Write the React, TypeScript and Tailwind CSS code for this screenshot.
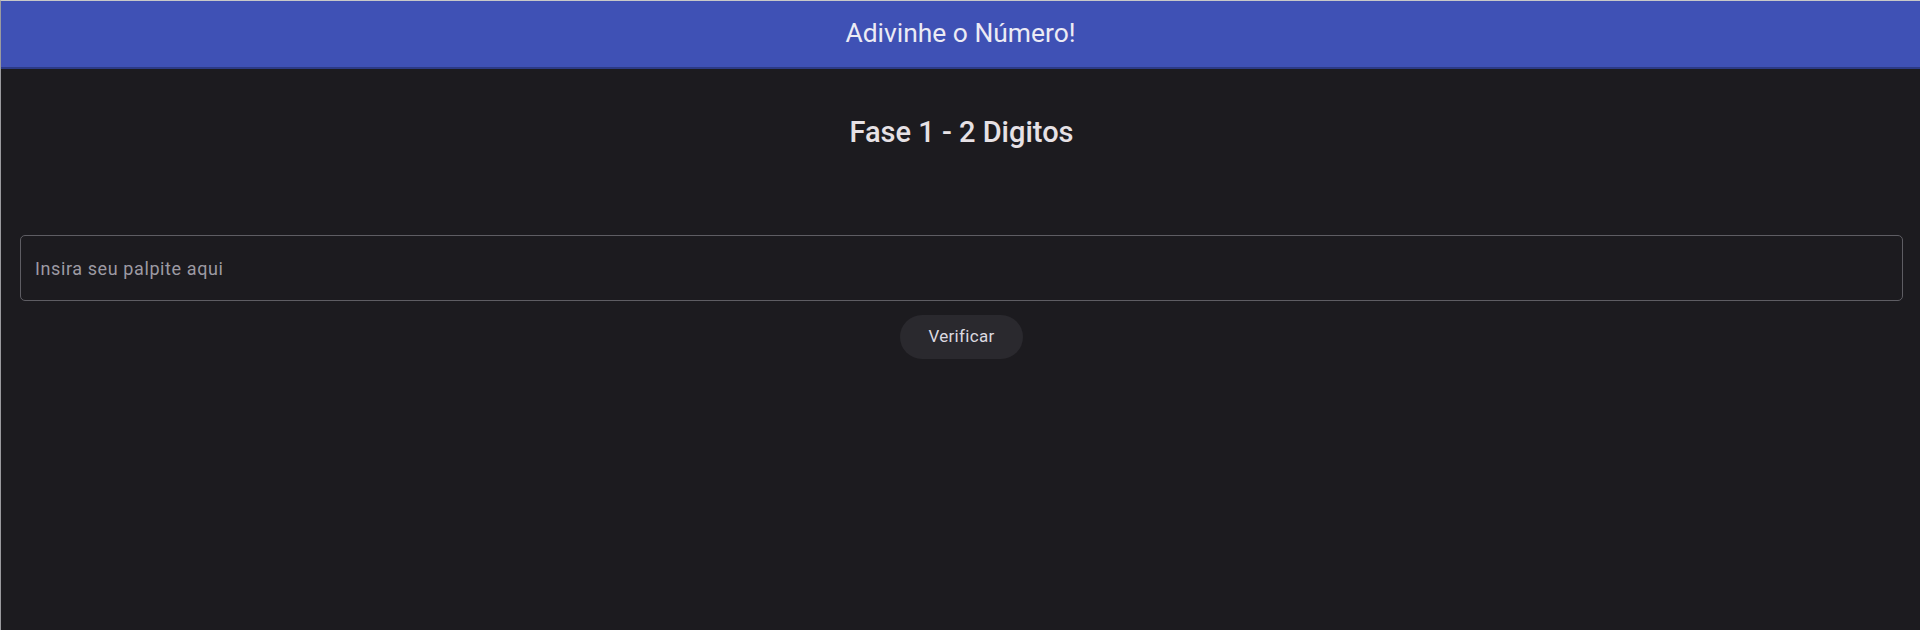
import React from "react";

const App = () => {
  return (
    <div
      className="min-h-[630px] w-full bg-[#1c1b1f] border-t border-l border-t-[#c8c8c8] border-l-[#9a9a9e] text-[#e6e1e5] overflow-hidden"
      style={{ fontFamily: "Roboto, 'Noto Sans', sans-serif" }}
    >
      {/* App bar */}
      <header className="h-[66px] bg-[#3f51b5] flex items-center justify-center shadow-[0_2px_0_#2c3a85]">
        <h1 className="text-[26.4px] text-[#ecebf4]">Adivinhe o Número!</h1>
      </header>

      {/* Content */}
      <main className="pl-[19px] pr-[17px] pt-[48px] flex flex-col items-center">
        <h2 className="text-[29px] font-medium leading-[34px] text-[#e6e1e5]">Fase 1 - 2 Digitos</h2>

        <input
          type="text"
          placeholder="Insira seu palpite aqui"
          className="mt-[86px] w-full h-[66px] rounded-[5px] border border-[#5e5d63] bg-transparent px-[14px] text-[18px] tracking-[0.6px] text-[#e6e1e5] placeholder:text-[#9d9aa3] outline-none"
        />

        <button className="mt-[14px] h-[44px] px-[28px] rounded-full bg-[#2a292e] text-[17px] tracking-[0.3px] text-[#dcd9e0]">
          Verificar
        </button>
      </main>
    </div>
  );
};

export default App;
